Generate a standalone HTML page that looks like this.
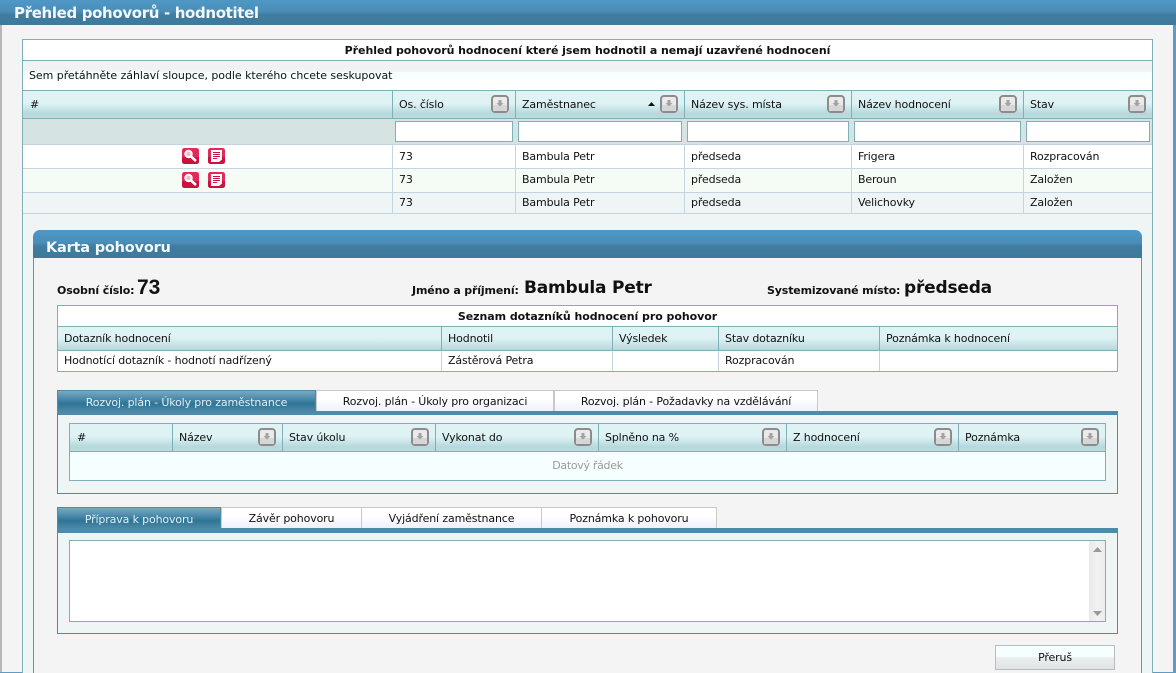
<!DOCTYPE html>
<html><head><meta charset="utf-8"><style>
html,body{margin:0;padding:0;width:1176px;height:673px;overflow:hidden;background:#f4f4f4}
body{position:relative;font:11px/14px "DejaVu Sans","Liberation Sans",sans-serif;letter-spacing:-.14px;color:#111}
div,span,svg{position:absolute;box-sizing:border-box;white-space:nowrap}
.hd{background:linear-gradient(#dff3f5 0,#dff3f5 45%,#b5d8dc 85%,#bcdcdf 100%)}
.bar{background:linear-gradient(#4f98c6 0,#4a8db8 45%,#3f7c9f 60%,#3f7a9b 100%)}
.l{width:1px;background:#7fb0b8}
.g{width:1px;background:#c5d5df}
.h{height:1px;background:#c5d5df}
.inp{background:#fff;border:1px solid #7fb0b8;height:21px;top:121px}
.t{line-height:14px;margin-top:1px}
.tab{background:linear-gradient(#fff 0,#fff 40%,#eef1fb 100%);border:1px solid #c8c8c8;border-bottom:0;text-align:center;line-height:19px}
.sel{background:linear-gradient(#7aa8c0 0,#4d8dac 35%,#2f7596 60%,#4f8aa8 100%);color:#dfeef5;text-align:center;line-height:19px}
.cap{text-align:center;font-weight:bold;line-height:21px;font-size:11px;letter-spacing:-.05px}
.lb{font:bold 11px/14px 'DejaVu Sans',sans-serif;letter-spacing:-.15px;top:284px}
.v{font:bold 17px/22px 'DejaVu Sans',sans-serif;letter-spacing:-.2px;top:277px}
</style></head><body>
<svg width="0" height="0" style="left:0;top:0"><defs>
<symbol id="sb" viewBox="0 0 18 18"><rect x="1" y="1" width="16" height="16" rx="3" fill="#eaeaea" stroke="#8c8c8c" stroke-width="2"/><rect x="2" y="10" width="14" height="6" fill="#d6d6d6"/><path d="M7.500 5h3v3h2L9 11.500 5.500 8h2z" fill="#a2a2a2"/></symbol>
<symbol id="mg" viewBox="0 0 17 17"><rect width="17" height="16" rx="2.500" fill="#e42a58"/><path d="M0 9H17V13.500a2.500 2.500 0 0 1-2.500 2.500H2.500A2.500 2.500 0 0 1 0 13.500z" fill="#c9123f"/><circle cx="6.500" cy="6" r="3.200" fill="#f6b8c8" stroke="#fff" stroke-width="2"/><path d="M9 8.500l5 4.500" stroke="#fff" stroke-width="2.600"/></symbol>
<symbol id="dc" viewBox="0 0 17 17"><rect width="17" height="16" rx="2.500" fill="#e42a58"/><path d="M0 9H17V13.500a2.500 2.500 0 0 1-2.500 2.500H2.500A2.500 2.500 0 0 1 0 13.500z" fill="#c9123f"/><path d="M3 2h11v9.500L11 14H3z" fill="#fff"/><path d="M5 4.500h7M5 6.500h7M5 8.500h7M5 10.500h4" stroke="#c9123f" stroke-width="1"/></symbol>
</defs></svg>

<!-- page frame -->
<div style="left:0;top:0;width:2px;height:673px;background:#b8b8b8"></div>
<div style="left:1173px;top:24px;width:3px;height:649px;background:#5f9cc4"></div>
<div style="left:0;top:672px;width:1176px;height:1px;background:#5f9cc4"></div>
<div class="bar" style="left:0;top:0;width:1176px;height:25px"></div>
<div style="left:14px;top:4px;font:bold 15px/18px 'DejaVu Sans',sans-serif;letter-spacing:-.35px;color:#f2f8fb">Přehled pohovorů - hodnotitel</div>

<!-- main grid -->
<div style="left:22px;top:39px;width:1131px;height:634px;background:#eff5f5;border:1px solid #7fb0b8;border-bottom:0"></div>
<div class="cap" style="left:23px;top:40px;width:1129px;height:20px;background:#fff">Přehled pohovorů hodnocení které jsem hodnotil a nemají uzavřené hodnocení</div>
<div style="left:23px;top:60px;width:1129px;height:1px;background:#7fb0b8"></div>
<div style="left:23px;top:61px;width:1129px;height:29px;background:linear-gradient(#f0f1f4 0,#f2f3f6 35%,#f7ffff 40%,#f7ffff 60%,#fff 60%,#fff 100%)"></div>
<div class="t" style="left:29px;top:68px;letter-spacing:-.05px">Sem přetáhněte záhlaví sloupce, podle kterého chcete seskupovat</div>
<div style="left:23px;top:90px;width:1129px;height:1px;background:#7fb0b8"></div>
<div class="hd" style="left:23px;top:91px;width:1129px;height:27px"></div>
<div style="left:23px;top:118px;width:1129px;height:1px;background:#7fb0b8"></div>
<div style="left:23px;top:119px;width:1129px;height:25px;background:#d5e3e3"></div>
<div style="left:23px;top:144px;width:1129px;height:24px;background:#fff"></div>
<div style="left:23px;top:168px;width:1129px;height:24px;background:#f5fcf5"></div>
<div class="h" style="left:23px;top:144px;width:1129px"></div>
<div class="h" style="left:23px;top:168px;width:1129px"></div>
<div class="h" style="left:23px;top:192px;width:1129px"></div>
<div class="h" style="left:23px;top:213px;width:1129px"></div>
<div class="l" style="left:392px;top:91px;height:27px"></div><div class="l" style="left:515px;top:91px;height:27px"></div><div class="l" style="left:684px;top:91px;height:27px"></div><div class="l" style="left:851px;top:91px;height:27px"></div><div class="l" style="left:1023px;top:91px;height:27px"></div>
<div class="g" style="left:392px;top:145px;height:68px"></div><div class="g" style="left:515px;top:145px;height:68px"></div><div class="g" style="left:684px;top:145px;height:68px"></div><div class="g" style="left:851px;top:145px;height:68px"></div><div class="g" style="left:1023px;top:145px;height:68px"></div>

<div class="t" style="left:30px;top:97px">#</div>
<div class="t" style="left:399px;top:97px">Os. číslo</div>
<div class="t" style="left:522px;top:97px">Zaměstnanec</div>
<div class="t" style="left:691px;top:97px">Název sys. místa</div>
<div class="t" style="left:858px;top:97px">Název hodnocení</div>
<div class="t" style="left:1030px;top:97px">Stav</div>
<svg style="left:491px;top:95px" width="18" height="18"><use href="#sb"/></svg>
<svg style="left:660px;top:95px" width="18" height="18"><use href="#sb"/></svg>
<svg style="left:827px;top:95px" width="18" height="18"><use href="#sb"/></svg>
<svg style="left:999px;top:95px" width="18" height="18"><use href="#sb"/></svg>
<svg style="left:1128px;top:95px" width="18" height="18"><use href="#sb"/></svg>
<svg style="left:648px;top:102px" width="7" height="4"><path d="M3.500 0L7 4H0z" fill="#111"/></svg>

<div class="inp" style="left:395px;width:118px"></div>
<div class="inp" style="left:518px;width:164px"></div>
<div class="inp" style="left:687px;width:162px"></div>
<div class="inp" style="left:854px;width:167px"></div>
<div class="inp" style="left:1026px;width:124px"></div>

<svg style="left:182px;top:148px" width="17" height="17"><use href="#mg"/></svg>
<svg style="left:208px;top:148px" width="17" height="17"><use href="#dc"/></svg>
<svg style="left:182px;top:172px" width="17" height="17"><use href="#mg"/></svg>
<svg style="left:208px;top:172px" width="17" height="17"><use href="#dc"/></svg>

<div class="t" style="left:399px;top:149px">73</div><div class="t" style="left:522px;top:149px">Bambula Petr</div><div class="t" style="left:691px;top:149px">předseda</div><div class="t" style="left:858px;top:149px">Frigera</div><div class="t" style="left:1030px;top:149px">Rozpracován</div>
<div class="t" style="left:399px;top:172px">73</div><div class="t" style="left:522px;top:172px">Bambula Petr</div><div class="t" style="left:691px;top:172px">předseda</div><div class="t" style="left:858px;top:172px">Beroun</div><div class="t" style="left:1030px;top:172px">Založen</div>
<div class="t" style="left:399px;top:195px">73</div><div class="t" style="left:522px;top:195px">Bambula Petr</div><div class="t" style="left:691px;top:195px">předseda</div><div class="t" style="left:858px;top:195px">Velichovky</div><div class="t" style="left:1030px;top:195px">Založen</div>

<!-- Karta -->
<div style="left:33px;top:240px;width:1109px;height:433px;background:#f4f4f4;border-left:1px solid #8a8a8a;border-right:1px solid #8a8a8a"></div>
<div class="bar" style="left:33px;top:230px;width:1109px;height:28px;border-radius:7px 7px 0 0"></div>
<div class="t" style="left:46px;top:238px;font:bold 14.500px/18px 'DejaVu Sans',sans-serif;letter-spacing:-.2px;color:#f2f8fb">Karta pohovoru</div>

<div class="lb" style="left:57px">Osobní číslo:</div>
<div style="left:137px;top:277px;font:bold 21px/22px 'Liberation Sans',sans-serif;letter-spacing:0">73</div>
<div class="lb" style="left:412px">Jméno a příjmení:</div>
<div class="v" style="left:524px">Bambula Petr</div>
<div class="lb" style="left:767px">Systemizované místo:</div>
<div class="v" style="left:904px">předseda</div>

<!-- Seznam -->
<div style="left:57px;top:305px;width:1061px;height:67px;background:#fff;border:1px solid #7fb0b8"></div>
<div class="cap" style="left:58px;top:306px;width:1059px;height:20px">Seznam dotazníků hodnocení pro pohovor</div>
<div style="left:58px;top:326px;width:1059px;height:1px;background:#7fb0b8"></div>
<div class="hd" style="left:58px;top:327px;width:1059px;height:23px;background:linear-gradient(#dff3f5 0,#dff3f5 45%,#b5d8dc 100%)"></div>
<div style="left:58px;top:350px;width:1059px;height:1px;background:#7fb0b8"></div>
<div class="l" style="left:441px;top:327px;height:23px"></div><div class="l" style="left:612px;top:327px;height:23px"></div><div class="l" style="left:718px;top:327px;height:23px"></div><div class="l" style="left:879px;top:327px;height:23px"></div>
<div class="g" style="left:441px;top:351px;height:20px"></div><div class="g" style="left:612px;top:351px;height:20px"></div><div class="g" style="left:718px;top:351px;height:20px"></div><div class="g" style="left:879px;top:351px;height:20px"></div>
<div class="t" style="left:64px;top:331px">Dotazník hodnocení</div><div class="t" style="left:448px;top:331px">Hodnotil</div><div class="t" style="left:619px;top:331px">Výsledek</div><div class="t" style="left:725px;top:331px">Stav dotazníku</div><div class="t" style="left:886px;top:331px">Poznámka k hodnocení</div>
<div class="t" style="left:64px;top:353px">Hodnotící dotazník - hodnotí nadřízený</div><div class="t" style="left:448px;top:353px">Zástěrová Petra</div><div class="t" style="left:725px;top:353px">Rozpracován</div>

<!-- Tabs 1 -->
<div style="left:57px;top:411px;width:1061px;height:83px;background:#eff5f5;border:1px solid #4f8aa8;border-top:4px solid #4f8aa8"></div>
<div class="sel" style="left:57px;top:390px;width:259px;height:22px;line-height:24px;border:1px solid #4f8aa8;border-bottom:0">Rozvoj. plán - Úkoly pro zaměstnance</div>
<div class="tab" style="left:316px;top:390px;width:238px;height:21px;line-height:22px">Rozvoj. plán - Úkoly pro organizaci</div>
<div class="tab" style="left:554px;top:390px;width:264px;height:21px;line-height:22px">Rozvoj. plán - Požadavky na vzdělávání</div>

<div style="left:69px;top:423px;width:1037px;height:58px;background:#f6ffff;border:1px solid #7fb0b8"></div>
<div class="hd" style="left:70px;top:424px;width:1035px;height:27px"></div>
<div style="left:70px;top:451px;width:1035px;height:1px;background:#7fb0b8"></div>
<div class="l" style="left:172px;top:424px;height:27px"></div><div class="l" style="left:282px;top:424px;height:27px"></div><div class="l" style="left:435px;top:424px;height:27px"></div><div class="l" style="left:598px;top:424px;height:27px"></div><div class="l" style="left:786px;top:424px;height:27px"></div><div class="l" style="left:958px;top:424px;height:27px"></div>
<div class="t" style="left:77px;top:430px">#</div><div class="t" style="left:179px;top:430px">Název</div><div class="t" style="left:289px;top:430px">Stav úkolu</div><div class="t" style="left:442px;top:430px">Vykonat do</div><div class="t" style="left:605px;top:430px">Splněno na %</div><div class="t" style="left:793px;top:430px">Z hodnocení</div><div class="t" style="left:965px;top:430px">Poznámka</div>
<svg style="left:258px;top:428px" width="18" height="18"><use href="#sb"/></svg>
<svg style="left:411px;top:428px" width="18" height="18"><use href="#sb"/></svg>
<svg style="left:574px;top:428px" width="18" height="18"><use href="#sb"/></svg>
<svg style="left:762px;top:428px" width="18" height="18"><use href="#sb"/></svg>
<svg style="left:934px;top:428px" width="18" height="18"><use href="#sb"/></svg>
<svg style="left:1081px;top:428px" width="18" height="18"><use href="#sb"/></svg>
<div class="t" style="left:70px;top:458px;width:1035px;text-align:center;color:#9a9a9a;letter-spacing:-.3px">Datový řádek</div>

<!-- Tabs 2 -->
<div style="left:57px;top:528px;width:1061px;height:106px;background:#eff5f5;border:1px solid #4f8aa8;border-top:5px solid #4f8aa8"></div>
<div class="sel" style="left:57px;top:507px;width:164px;height:22px;line-height:24px;border:1px solid #4f8aa8;border-bottom:0">Příprava k pohovoru</div>
<div class="tab" style="left:221px;top:507px;width:141px;height:21px;line-height:22px">Závěr pohovoru</div>
<div class="tab" style="left:361px;top:507px;width:181px;height:21px;line-height:22px">Vyjádření zaměstnance</div>
<div class="tab" style="left:541px;top:507px;width:176px;height:21px;line-height:22px">Poznámka k pohovoru</div>

<div style="left:69px;top:540px;width:1037px;height:82px;background:#fff;border:1px solid #7fb0b8"></div>
<div style="left:1089px;top:541px;width:16px;height:80px;background:linear-gradient(90deg,#e9e9e9 0,#f2f2f2 50%,#ececec 100%)"></div>
<svg style="left:1093px;top:547px" width="9" height="5"><path d="M4.500 0L9 5H0z" fill="#999"/></svg>
<svg style="left:1093px;top:611px" width="9" height="5"><path d="M4.500 5L9 0H0z" fill="#999"/></svg>

<!-- Button -->
<div style="left:995px;top:645px;width:120px;height:25px;border:1px solid #b5bcc6;background:linear-gradient(#f6ffff 0,#f6ffff 45%,#eaeeee 50%,#e0e4e4 100%);text-align:center;line-height:23px">Přeruš</div>
</body></html>
